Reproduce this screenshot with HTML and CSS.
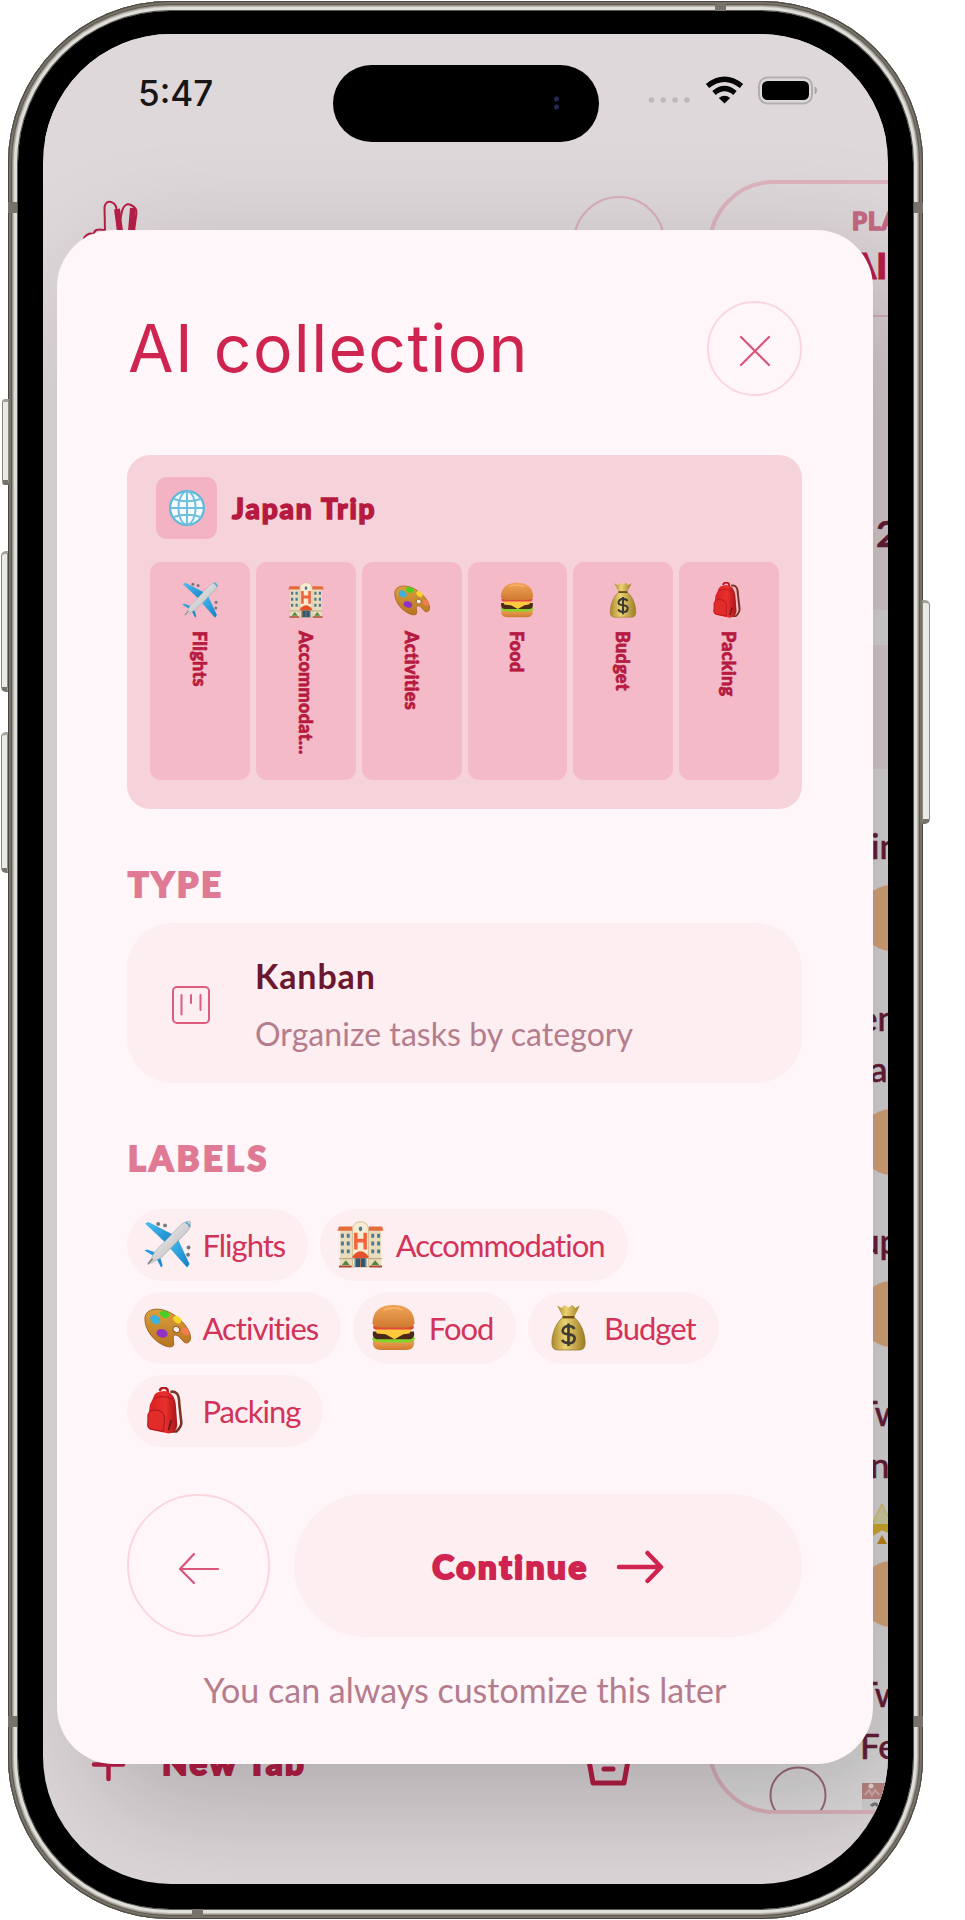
FILE: index.html
```html
<!DOCTYPE html>
<html lang="en">
<head>
<meta charset="utf-8">
<title>AI collection</title>
<link rel="stylesheet" href="styles.css">
</head>
<body>
<svg class="sprite" aria-hidden="true">
  <defs>
    <linearGradient id="gBody" x1="0" y1="0" x2="1" y2="1"><stop offset="0" stop-color="#fff"/><stop offset="1" stop-color="#a9a9ad"/></linearGradient>
    <linearGradient id="gWing" x1="0" y1="0" x2="1" y2="1"><stop offset="0" stop-color="#4cc0f2"/><stop offset="1" stop-color="#1180c4"/></linearGradient>
    <linearGradient id="gBun" x1="0" y1="0" x2="0" y2="1"><stop offset="0" stop-color="#f0a456"/><stop offset="1" stop-color="#cf7a30"/></linearGradient>
    <linearGradient id="gBag" x1="0" y1="0" x2="1" y2="0"><stop offset="0" stop-color="#a98a2c"/><stop offset=".4" stop-color="#ecd272"/><stop offset="1" stop-color="#9c7b25"/></linearGradient>
    <linearGradient id="gPack" x1="0" y1="0" x2="1" y2="0"><stop offset="0" stop-color="#d81f22"/><stop offset=".6" stop-color="#e8302d"/><stop offset="1" stop-color="#a91318"/></linearGradient>
    <linearGradient id="gPal" x1="0" y1="0" x2="0" y2="1"><stop offset="0" stop-color="#dba03f"/><stop offset="1" stop-color="#b87420"/></linearGradient>
  </defs>
  <symbol id="plane" viewBox="0 0 48 48">
    <g fill="#77787c"><circle cx="14.5" cy="3" r="2"/><circle cx="21.5" cy="4.5" r="2"/><circle cx="45.500" cy="27" r="2"/><circle cx="45" cy="34.500" r="2"/></g>
    <path d="M1 2.500 4.500 1 31 14.500 24 24z" fill="url(#gWing)"/>
    <path d="M24 25 34 17 46.500 44 44 47.500z" fill="url(#gWing)"/>
    <path d="M.5 30 3 29 13 32.500 11 36.500z" fill="#2b9fdd"/>
    <path d="M12 37 16 35 19 45.500 17.500 47.500z" fill="#1b8dd0"/>
    <path d="M37 4.500C41 .5 46.500-.5 47.500.8 48.500 2 47.500 7 44 11L17.500 37.500 4 44.500 11 31.500z" fill="url(#gBody)" stroke="#9a9b9f" stroke-width=".6"/>
    <path d="M4 43.500 9 38.500" stroke="#777" stroke-width="1.300"/>
    <path d="M42.500 1.500Q46.500 3 46.500 6" fill="none" stroke="#43a8d8" stroke-width="1.700"/>
  </symbol>
  <symbol id="hotel" viewBox="0 0 48 48">
    <path d="M3 9H45V47H3z" fill="#e9dcbd"/>
    <path d="M16 47V7Q17 1 24 .8 31 1 32 7V47z" fill="#f7ecd2" stroke="#cdb68c" stroke-width=".9"/>
    <path d="M2 5.500H15.500V10H.5zM46 5.500H32.500V10H47.500z" fill="#e66b3d"/>
    <g fill="#4f7894"><path d="M4 13h3v4H4zM10 13h3v4h-3zM4 21h3v4H4zM10 21h3v4h-3zM4 29h3v4H4zM10 29h3v4h-3zM35 13h3v4h-3zM41 13h3v4h-3zM35 21h3v4h-3zM41 21h3v4h-3zM35 29h3v4h-3zM41 29h3v4h-3z"/><ellipse cx="24" cy="8" rx="1.800" ry="2.500"/></g>
    <path d="M17.500 12H21V18H27V12H30.500V29H27V22H21V29H17.500z" fill="#f0633c"/>
    <path d="M16 36Q24 26 32 36V38H16z" fill="#e4502a"/>
    <path d="M18 38H30V47H18z" fill="#2c5878"/><path d="M24 38V47M19 38V47M29 38V47" stroke="#b27b4c"/>
    <path d="M2 38.500H16M32 38.500H46" stroke="#b7a074"/>
    <path d="M5 45 9 40 13 45zM35 45 39 40 43 45z" fill="#578545"/>
    <path d="M2 46.500H15M33 46.500H46" stroke="#a84d30" stroke-width="2"/>
  </symbol>
  <symbol id="palette" viewBox="0 0 48 48">
    <path d="M1 14C2 4 16 3 27 9 39 15.500 48 27 47.500 35 47 40 43 41.500 39.500 37.500 37 34 33 30.500 31 32 28 34 32 41 29.500 43 26 45.500 18 42 12 37 5 31 .5 22 1 14z" fill="url(#gPal)" stroke="#9d641a"/>
    <ellipse cx="33" cy="26" rx="3.500" ry="3" transform="rotate(30 33 26)" fill="#fbeaec" stroke="#91591a"/>
    <ellipse cx="11.500" cy="16" rx="5.500" ry="4.200" transform="rotate(35 11.500 16)" fill="#39b2df"/>
    <ellipse cx="21" cy="10.500" rx="5" ry="3.700" transform="rotate(20 21 10.500)" fill="#49cf22"/>
    <ellipse cx="34" cy="16" rx="4.500" ry="3.200" transform="rotate(35 34 16)" fill="#f8d529"/>
    <ellipse cx="42.500" cy="28" rx="4.500" ry="3.300" transform="rotate(45 42.500 28)" fill="#f57b50"/>
    <ellipse cx="18.500" cy="30" rx="5.800" ry="4.300" transform="rotate(15 18.500 30)" fill="#8e31c4"/>
  </symbol>
  <symbol id="burger" viewBox="0 0 48 48">
    <path d="M3 37H45V41Q44 47 36 47H12Q4 47 3 41z" fill="url(#gBun)"/>
    <path d="M3 34Q6 32 9 34H40Q44 32 46 35 45 39 41 38 38 41 34 38.500 30 41 26 38.500 22 41 18 38.500 14 41 10 38 5 40 2 36z" fill="#83d52b"/>
    <path d="M3 28H45Q46 35 41 36H7Q2 35 3 28z" fill="#4b2917"/>
    <path d="M5 25.500H43L40 30 34 31 25 36 16 31 7 30z" fill="#ffc93c"/>
    <path d="M3.500 22H44.500Q45.500 26 42 26H6Q2.500 26 3.500 22z" fill="#df4b38"/>
    <path d="M2.500 20C2.500 7 11 1 24 1S45.500 7 45.500 20Q44 24 36 24H12Q4 24 2.500 20z" fill="url(#gBun)"/>
    <path d="M14 6Q24 2 33 6" fill="none" stroke="#ffc27b" stroke-width="2" opacity=".6"/>
  </symbol>
  <symbol id="money" viewBox="0 0 48 48">
    <path d="M12.500 1.500 17 4 20 1 24 3.500 28 1 31 4 35.500 1.500 30 13H18z" fill="url(#gBag)"/>
    <path d="M19 13H29C36 18 41 29 41 40Q41 47 35 47H13Q7 47 7 40C7 29 12 18 19 13z" fill="url(#gBag)" stroke="#907323" stroke-width=".7"/>
    <path d="M18 13.500H30" stroke="#704e1b" stroke-width="2.500"/>
    <path d="M30 25.500Q28.500 22.500 24 22.500T18.200 26.500 24 31 30.200 36 24 40 17.500 36.500M24 20V43" fill="none" stroke="#3e3b34" stroke-width="2.700"/>
  </symbol>
  <symbol id="pack" viewBox="0 0 48 48">
    <path d="M27 5Q36 3 36 17L38 35Q39 40 33 45.500H24" fill="none" stroke="#793423" stroke-width="2.600"/>
    <path d="M16 4Q17 0 22 1 25 2 24 6" fill="none" stroke="#b71922" stroke-width="2.500"/>
    <path d="M9 12Q10 4 21 4 31 5 32.500 18L34 39Q33 47 25 47.500L8 44Q3 43 3.500 38L6 18z" fill="url(#gPack)"/>
    <path d="M4 28Q6 23 12 23.500 20 24 21 31L20 45.500 7.500 43Q3 42 4 37z" fill="#e22c2a" stroke="#a9141c"/>
    <path d="M10 12Q20 7 29 13" fill="none" stroke="#b3131c"/><path d="M28 34 25 44" stroke="#6c1720" stroke-width="1.800"/>
  </symbol>
  <symbol id="globe" viewBox="0 0 48 48">
    <circle cx="24" cy="24" r="22.500" fill="#f4fafd" stroke="#5db9da" stroke-width="3"/>
    <g fill="none" stroke="#6fc0de" stroke-width="2.600"><path d="M24 2V46M2 24H46M6 12Q24 18 42 12M6 36Q24 30 42 36"/><ellipse cx="24" cy="24" rx="11.500" ry="22"/></g>
  </symbol>
</svg>

<main class="phone">
  <i class="key key-action"></i><i class="key key-up"></i><i class="key key-down"></i><i class="key key-power"></i>
  <div class="bezel">
    <div class="screen">
      <svg class="backdrop" viewBox="43 34 845 1850" width="845" height="1850">
        <defs><linearGradient id="tint" x1="0" y1="182" x2="0" y2="610" gradientUnits="userSpaceOnUse"><stop offset="0" stop-color="#ded8da"/><stop offset=".4" stop-color="#dfd4d7"/><stop offset="1" stop-color="#e0d4d6"/></linearGradient>
        <clipPath id="panel"><rect x="710" y="182" width="400" height="1630" rx="64"/></clipPath></defs>
        <g fill="none" stroke="#b81f47" stroke-width="2" stroke-linecap="round">
          <path d="M105 231 104.500 207Q106 200.500 111 202 116 203.500 116.500 209L118 231 122 211Q125 202 131 205 137 208 136.500 213L134 231M84 238Q88 232 94 234 94 228 104 230"/>
          <path d="M117 209 120 231M133 208 131 231" stroke-width="6" stroke-linecap="butt"/>
        </g>
        <circle cx="619" cy="242" r="45" fill="none" stroke="#dbafb9" stroke-width="2"/>
        <g clip-path="url(#panel)">
          <rect x="700" y="182" width="400" height="428" fill="url(#tint)"/>
          <rect x="700" y="610" width="400" height="1202" fill="#e1dfdf"/>
          <rect x="700" y="645" width="400" height="124" fill="#e0d4d6"/>
          <path d="M710 316H900" stroke="#dcb2bc" stroke-width="2"/>
          <g fill="#e1ac7f"><rect x="859" y="885" width="90" height="66" rx="33"/><rect x="859" y="1109" width="90" height="66" rx="33"/><rect x="859" y="1281" width="90" height="66" rx="33"/><rect x="859" y="1561" width="90" height="66" rx="33"/></g>
          <path d="M864 1528 873 1522 882 1504 891 1522 900 1528 892 1533 882 1530 872 1536z" fill="#d9d6a8" stroke="#dfc04a"/><path d="M864 1528 874 1524H890L900 1528 892 1535 882 1530 872 1536z" fill="#d7b02f"/><path d="M877 1544 882 1535 887 1544z" fill="#c88a1d"/>
          <circle cx="798" cy="1795" r="27.500" fill="none" stroke="#9e6c7e" stroke-width="2"/>
          <rect x="862" y="1783" width="40" height="16" fill="#bd8783"/><circle cx="871" cy="1786" r="2.500" fill="#ead9d9"/><path d="M865 1795 869 1790 872 1795 875 1790 879 1795" fill="none" stroke="#d3aeac" stroke-width="2"/>
          <rect x="862" y="1799" width="40" height="12" fill="#d3d3d3"/><path d="M871 1806Q877 1800 880 1811" fill="none" stroke="#777" stroke-width="3"/>
        </g>
        <rect x="710" y="182" width="400" height="1630" rx="64" fill="none" stroke="#ddb4be" stroke-width="4"/>
        <text x="852" y="230" class="plan">PLAN</text><text x="851" y="279" class="plan-name">AI</text>
        <g class="behind">
          <text x="876" y="547" class="count">2</text>
          <text x="871" y="859">in</text><text x="859" y="1031">en</text><text x="870" y="1082">as</text>
          <text x="860" y="1254">up</text><text x="857" y="1426">Tw</text><text x="870" y="1478">nf</text>
          <text x="857" y="1707">Tw</text><text x="860" y="1759">Fe</text>
        </g>
        <path d="M94 1764.500H123M108.500 1750V1779" fill="none" stroke="#b81f47" stroke-width="4.500" stroke-linecap="round"/>
        <text x="162" y="1775" class="new-tab">New Tab</text>
        <path d="M588 1755 593 1783H624L629 1755M604 1769H613" fill="none" stroke="#b81f47" stroke-width="5" stroke-linejoin="round" stroke-linecap="round"/>
      </svg>

      <header class="status">
        <span class="clock">5:47</span>
        <span class="island"><i class="lens"></i></span>
        <svg class="signals" viewBox="645 70 175 44" width="175" height="44">
          <g fill="#bdb9ba"><circle cx="651.500" cy="100" r="2.800"/><circle cx="663.300" cy="100" r="2.800"/><circle cx="675.100" cy="100" r="2.800"/><circle cx="687" cy="100" r="2.800"/></g>
          <g fill="none" stroke="#050505" stroke-width="5.200"><path d="M707.500 86Q724.500 72.500 741.500 86"/><path d="M714 93Q724.500 84 735 93"/></g>
          <path d="M724.500 103.500 718.800 98Q724.500 93.500 730.200 98z" fill="#050505"/>
          <rect x="759" y="77.500" width="53" height="26" rx="8.500" fill="none" stroke="#b1afae" stroke-width="2"/>
          <rect x="762" y="81" width="47" height="19" rx="5.500" fill="#000"/>
          <path d="M815 87Q818.500 90 815 94z" fill="#aaa8a7" stroke="#aaa8a7"/>
        </svg>
      </header>

      <section class="modal">
        <div class="modal-head">
          <h1>AI collection</h1>
          <button class="round close"><svg viewBox="0 0 32 32" width="32" height="32"><path d="M2 3 30 31M30 3 2 31"/></svg></button>
        </div>

        <div class="preview">
          <div class="preview-title"><span class="badge"><svg width="36" height="36"><use href="#globe"/></svg></span><strong>Japan Trip</strong></div>
          <div class="columns">
            <div class="column"><svg><use href="#plane"/></svg><span>Flights</span></div>
            <div class="column"><svg><use href="#hotel"/></svg><span>Accommodat...</span></div>
            <div class="column"><svg><use href="#palette"/></svg><span>Activities</span></div>
            <div class="column"><svg><use href="#burger"/></svg><span>Food</span></div>
            <div class="column"><svg><use href="#money"/></svg><span>Budget</span></div>
            <div class="column"><svg><use href="#pack"/></svg><span>Packing</span></div>
          </div>
        </div>

        <h2 class="type-label">TYPE</h2>
        <div class="type-card">
          <svg viewBox="0 0 38 38" width="38" height="38"><rect x="1" y="1" width="36" height="36" rx="4"/><path d="M9.500 9V28.500M19 9V17M28.500 9V24"/></svg>
          <div><b>Kanban</b><p>Organize tasks by category</p></div>
        </div>

        <h2 class="labels-label">LABELS</h2>
        <div class="chips">
          <span class="chip"><svg><use href="#plane"/></svg>Flights</span>
          <span class="chip"><svg><use href="#hotel"/></svg>Accommodation</span>
          <span class="chip"><svg><use href="#palette"/></svg>Activities</span>
          <span class="chip"><svg><use href="#burger"/></svg>Food</span>
          <span class="chip"><svg><use href="#money"/></svg>Budget</span>
          <span class="chip"><svg><use href="#pack"/></svg>Packing</span>
        </div>

        <div class="actions">
          <button class="round back"><svg viewBox="0 0 42 32" width="42" height="32"><path d="M40 17H2M16 2 2 17 16 31"/></svg></button>
          <button class="continue"><span>Continue</span><svg viewBox="0 0 48 34" width="48" height="34"><path d="M3 17H44M31.500 3 45 17 31.500 31"/></svg></button>
        </div>
        <p class="hint">You can always customize this later</p>
      </section>
    </div>
  </div>
  <i class="seam seam-top"></i><i class="seam seam-bottom"></i><i class="seam seam-l1"></i><i class="seam seam-l2"></i><i class="seam seam-r1"></i><i class="seam seam-r2"></i>
</main>
</body>
</html>
```
FILE: styles.css
```css
* { box-sizing: border-box; }
body { margin: 0; width: 965px; height: 1920px; overflow: hidden; background: #fff; font-family: Lato, sans-serif; }
h1, h2, p { margin: 0; }
button { border: 0; padding: 0; background: none; font: inherit; }
svg { display: block; flex: none; }
.sprite { position: absolute; width: 0; height: 0; }

/* Device frame */
.phone {
  position: relative; margin: 1px 0 0 8px; width: 915px; height: 1918px; padding: 10px; border-radius: 162px;
  background: #dddbd4;
  box-shadow: inset 0 0 0 1px #4b4842, inset 0 0 0 3px #77736b, inset 0 0 0 4px #5e5a53, inset 0 0 0 5px #99958c, inset 0 0 0 6px #bbb8b0, inset 0 0 0 9px #e0ded8, inset 0 0 0 10px #55534f;
}
.bezel { height: 100%; padding: 23px 25px 25px; border-radius: 152px; background: #000; }
.screen { position: relative; height: 100%; overflow: hidden; border-radius: 128px; background: #ded8da; }
.key { position: absolute; width: 7px; border: 1px solid #8d8a82; border-bottom: 5px solid #77736b; border-top: 3px solid #a5a29a; background: #eceae6; }
.key-action { left: -6px; top: 398px; height: 86px; border-radius: 3px 0 0 3px; }
.key-up { left: -7px; top: 550px; height: 141px; border-radius: 5px 0 0 5px; }
.key-down { left: -7px; top: 731px; height: 141px; border-radius: 5px 0 0 5px; }
.key-power { left: 914px; top: 599px; width: 8px; height: 224px; border-radius: 0 5px 5px 0; }
.seam { position: absolute; background: #77736b; }
.seam-top { left: 707px; top: 1px; width: 11px; height: 9px; }
.seam-bottom { left: 184px; bottom: 1px; width: 11px; height: 9px; }
.seam-l1, .seam-l2 { left: 0; width: 9px; height: 11px; }
.seam-r1, .seam-r2 { right: 0; width: 9px; height: 11px; }
.seam-l1, .seam-r1 { top: 201px; }
.seam-l2, .seam-r2 { top: 1715px; }

/* Page behind the modal */
.backdrop { position: absolute; inset: 0; }
.behind { font: 500 35px Lato, sans-serif; fill: #6a1e3a; stroke: #6a1e3a; stroke-width: .5px; }
.behind .count { font-size: 37px; font-weight: 700; }
.plan { font: 900 24px Lato, sans-serif; fill: #c66a83; stroke: #c66a83; stroke-width: 1.500px; letter-spacing: 1px; }
.plan-name { font: 900 36px Lato, sans-serif; fill: #b81f47; stroke: #b81f47; stroke-width: 1px; }
.new-tab { font: 900 33px Lato, sans-serif; letter-spacing: 2.400px; fill: #b81f47; stroke: #b81f47; stroke-width: 2px; }

/* Status bar */
.status { position: relative; z-index: 1; display: flex; justify-content: space-between; height: 105px; padding: 36px 68px 0 95px; background: #ded8da; }
.clock { font: 500 35px/46px Inter, sans-serif; color: #171516; }
.island { position: absolute; left: 289.500px; top: 31px; width: 266px; height: 77px; border-radius: 39px; background: #000; }
.lens { position: absolute; left: 221px; top: 31px; width: 5px; height: 14px; background: radial-gradient(circle at 50% 3px, #262658 2px, transparent 3px), radial-gradient(circle at 50% 11px, #262658 2px, transparent 3px); }

/* Modal */
.modal {
  position: relative; width: 816px; height: 1534px; margin: 91px 0 0 14px; padding: 70px 71px 0 70px; border-radius: 57px;
  background: #fff6fa; box-shadow: 35px 42px 130px rgba(0, 0, 0, .22);
}
.modal-head { display: flex; align-items: center; justify-content: space-between; height: 96px; }
h1 { padding-left: 1px; font: 400 66px/90px Inter, sans-serif; letter-spacing: 1.350px; color: #cf244f; }
.round { display: flex; align-items: center; justify-content: center; border: 2px solid #fad7de; border-radius: 50%; }
.round svg { fill: none; stroke: #d9567a; stroke-width: 2.200; stroke-linecap: round; stroke-linejoin: round; }
.close { width: 95px; height: 95px; padding-top: 3px; }

.preview { height: 354px; margin-top: 59px; padding: 22px 23px 0; border-radius: 23px; background: #f6d2da; }
.preview-title { display: flex; align-items: center; gap: 15px; height: 62px; padding-left: 6px; }
.preview-title strong { font-size: 28px; font-weight: 900; letter-spacing: 1.850px; color: #b61a40; -webkit-text-stroke: 1.500px #b61a40; }
.badge { display: flex; align-items: center; justify-content: center; width: 61px; height: 62px; border-radius: 11px; background: #f4b3c2; }
.columns { display: grid; grid-template-columns: repeat(6, 1fr); gap: 6px; margin-top: 23px; height: 218px; }
.column { display: flex; flex-direction: column; align-items: center; gap: 13px; padding-top: 20px; border-radius: 11px; background: #f5bac8; }
.column svg { width: 36px; height: 36px; }
.column span { writing-mode: vertical-rl; font-size: 18px; line-height: 24px; font-weight: 900; letter-spacing: .3px; color: #b61a40; -webkit-text-stroke: .7px #b61a40; }

h2 { height: 40px; padding-left: 1px; font-size: 34px; line-height: 40px; font-weight: 900; letter-spacing: 3.600px; color: #e07a94; -webkit-text-stroke: 2px #e07a94; }
.type-label { margin-top: 55px; letter-spacing: 3px; }
.type-card { display: flex; align-items: center; gap: 45px; height: 160px; margin-top: 19px; padding: 3px 0 0 45px; border-radius: 46px; background: #fdeef1; }
.type-card svg { fill: none; stroke: #de5d7e; stroke-width: 2; stroke-linecap: round; }
.type-card b { display: block; font-size: 34px; line-height: 58px; letter-spacing: .9px; color: #6b1730; }
.type-card p { font-size: 32px; line-height: 58px; letter-spacing: .05px; color: #b47d8d; }
.labels-label { margin-top: 55px; }
.chips { display: flex; flex-wrap: wrap; gap: 11.500px 12px; margin-top: 31px; }
.chip { display: flex; align-items: center; gap: 11.500px; height: 71.500px; padding: 0 23px 0 17px; border-radius: 36px; background: #fdeef1; font-size: 31px; letter-spacing: -1px; color: #d33259; }
.chip svg { width: 47px; height: 47px; }
.actions { display: flex; gap: 24px; margin-top: 47px; height: 143px; }
.back { width: 143px; height: 143px; padding-top: 5px; }
.continue { flex: 1; display: flex; align-items: center; justify-content: center; gap: 27px; padding-top: 2px; border-radius: 72px; background: #fdeef1; font-size: 33px; font-weight: 900; letter-spacing: 2.700px; color: #cf244f; -webkit-text-stroke: 2.200px #cf244f; }
.continue svg { margin-top: 1px; fill: none; stroke: #cf244f; stroke-width: 4.500; stroke-linecap: round; stroke-linejoin: round; }
.hint { margin-top: 33px; padding-left: 1px; text-align: center; font-size: 34px; line-height: 40px; color: #b47d8d; }
```
